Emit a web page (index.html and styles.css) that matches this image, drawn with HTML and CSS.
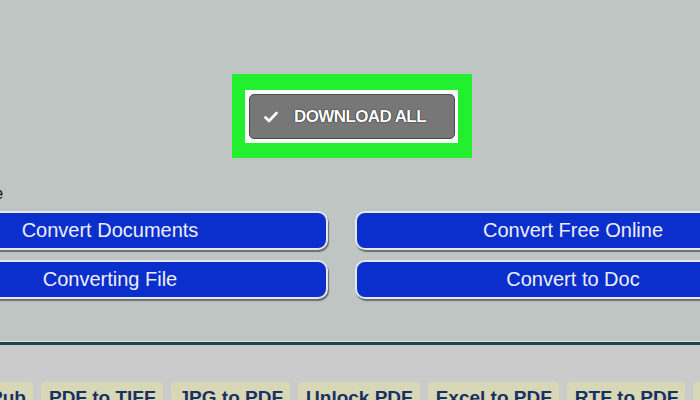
FILE: index.html
```html
<!DOCTYPE html>
<html lang="en">

<head>
    <meta charset="UTF-8">
    <meta name="viewport" content="width=device-width, initial-scale=1.0">
    <link rel="stylesheet" href="styles.css">
    <title>Convert Files</title>
</head>

<body>
    <div class="page">
        <div class="top-area"></div>

        <div class="download-frame">
            <div class="download-inner">
                <button class="download-btn">
                    <svg class="check" width="14" height="12" viewBox="0 0 14 12">
                        <path d="M1.5 6.5 L5 10 L12.5 2" fill="none" stroke="#fff" stroke-width="2.6"
                            stroke-linecap="round" stroke-linejoin="round" />
                    </svg>
                    <span>DOWNLOAD ALL</span>
                </button>
            </div>
        </div>

        <p class="hint">Choose</p>

        <div class="convert-grid">
            <a class="convert-btn">Convert Documents</a>
            <a class="convert-btn">Convert Free Online</a>
            <a class="convert-btn">Converting File</a>
            <a class="convert-btn">Convert to Doc</a>
        </div>

        <div class="divider"></div>

        <div class="tools">
            <ul class="tool-tabs">
                <li>PDF to ePub</li>
                <li>PDF to TIFF</li>
                <li>JPG to PDF</li>
                <li>Unlock PDF</li>
                <li>Excel to PDF</li>
                <li>RTF to PDF</li>
                <li>TXT to PDF</li>
            </ul>
        </div>
    </div>
</body>

</html>
```

FILE: styles.css
```css
* {
    margin: 0;
    padding: 0;
    box-sizing: border-box;
}

body {
    width: 700px;
    height: 400px;
    overflow: hidden;
    background-color: #bec5c2;
    font-family: "Liberation Sans", Arial, sans-serif;
}

.page {
    width: 700px;
    height: 400px;
    overflow: hidden;
}

.top-area {
    height: 74px;
}

/* green highlight around the download button */
.download-frame {
    width: 240px;
    height: 84px;
    margin-left: 232px;
    padding: 16px 14px 15px 13px;
    background-color: #22ef2d;
}

.download-inner {
    height: 53px;
    padding: 4px 3px 4px 4px;
    background-color: #fbfdfb;
}

.download-btn {
    display: flex;
    align-items: center;
    width: 206px;
    height: 45px;
    padding-left: 14px;
    background-color: #777777;
    border: 1px solid #4b4b4b;
    border-radius: 5px;
    color: #fff;
    font-family: "Liberation Sans", Arial, sans-serif;
    font-size: 17px;
    font-weight: bold;
    letter-spacing: -0.6px;
    text-shadow: 0 0 1px #2a2a2a, 0 0 1px #2a2a2a, 0 0 1px #2a2a2a;
}

.download-btn .check {
    margin-right: 16px;
}

.hint {
    margin-top: 27px;
    margin-left: -52px;
    height: 26px;
    font-size: 16px;
    color: #111;
}

.convert-grid {
    display: grid;
    grid-template-columns: 436px 436px;
    grid-auto-rows: 39px;
    column-gap: 27px;
    row-gap: 10px;
    margin-left: -108px;
}

.convert-btn {
    display: flex;
    align-items: center;
    justify-content: center;
    background-color: #0a2fcc;
    border: 2px solid #e4e7ec;
    border-radius: 10px;
    box-shadow: 1px 2px 1px #6a6e70;
    color: #eeeefa;
    font-size: 20px;
    padding-bottom: 1px;
}

.divider {
    margin-top: 42px;
    height: 4px;
    border-top: 1px solid #dfe4e3;
    background-color: #1e4549;
}

.tools {
    height: 60px;
    background-color: #cbcbcb;
    padding-top: 37px;
}

.tool-tabs {
    display: flex;
    gap: 8px;
    list-style: none;
    margin-left: -95px;
}

.tool-tabs li {
    flex: none;
    height: 30px;
    padding: 5px 7px 0 8px;
    background-color: #d8d8b6;
    border-radius: 4px 4px 0 0;
    color: #183163;
    font-size: 19px;
    font-weight: bold;
    white-space: nowrap;
}
```
